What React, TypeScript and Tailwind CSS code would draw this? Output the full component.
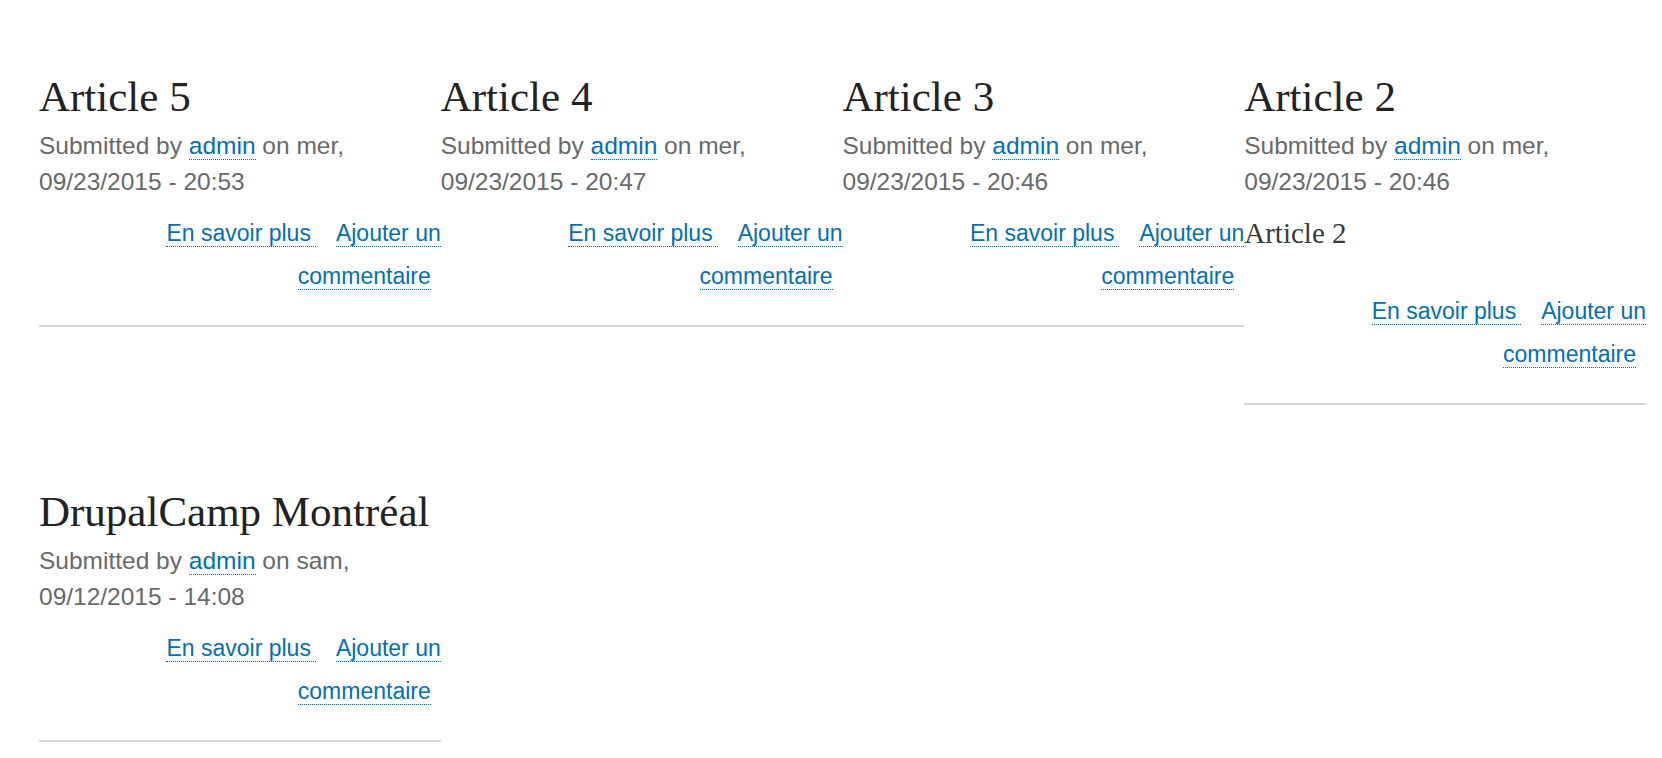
import React from 'react';

type Article = {
  title: string;
  day: string;
  date: string;
  body?: string;
};

const articles: Article[] = [
  { title: 'Article 5', day: 'mer', date: '09/23/2015 - 20:53' },
  { title: 'Article 4', day: 'mer', date: '09/23/2015 - 20:47' },
  { title: 'Article 3', day: 'mer', date: '09/23/2015 - 20:46' },
  { title: 'Article 2', day: 'mer', date: '09/23/2015 - 20:46', body: 'Article 2' },
  { title: 'DrupalCamp Montréal', day: 'sam', date: '09/12/2015 - 14:08' },
];

const linkCls = 'text-[#0071b3] border-b border-dotted border-[#0071b3]';

function Teaser({ article }: { article: Article }) {
  return (
    <article className="border-b-2 border-[#d3d7d9] pb-[27px]">
      <h2 className="font-['Liberation_Serif',serif] text-[43px] leading-[48px] text-[#222222] whitespace-nowrap mb-[7px]">
        {article.title}
      </h2>
      <div className="font-['Liberation_Sans',Arial,sans-serif] text-[24.5px] leading-[36px] text-[#68696b]">
        Submitted by <a className={linkCls}>admin</a> on {article.day},
        <br />
        {article.date}
      </div>
      {article.body &&
      <p className="mt-[12px] font-['Liberation_Serif',serif] text-[29px] leading-[43px] text-[#3b3b3b]">
          {article.body}
        </p>
      }
      <div
        className={
          article.body ?
          'mt-[35px] text-right font-[\'Liberation_Sans\',Arial,sans-serif] text-[23px] leading-[43px]' :
          'mt-[12px] text-right font-[\'Liberation_Sans\',Arial,sans-serif] text-[23px] leading-[43px]'
        }>
        <a className={`${linkCls} pr-[5px]`}>En savoir plus</a>
        <span className="ml-[20px] pr-[10px]">
          <a className={linkCls}>Ajouter un commentaire</a>
        </span>
      </div>
    </article>);

}

export default function App() {
  return (
    <div className="min-h-screen bg-white pl-[39px] pt-[73px]">
      <div className="grid w-[1607px] grid-cols-4 items-start gap-y-[83px]">
        {articles.map((a) =>
        <Teaser key={a.title} article={a} />
        )}
      </div>
    </div>);

}
